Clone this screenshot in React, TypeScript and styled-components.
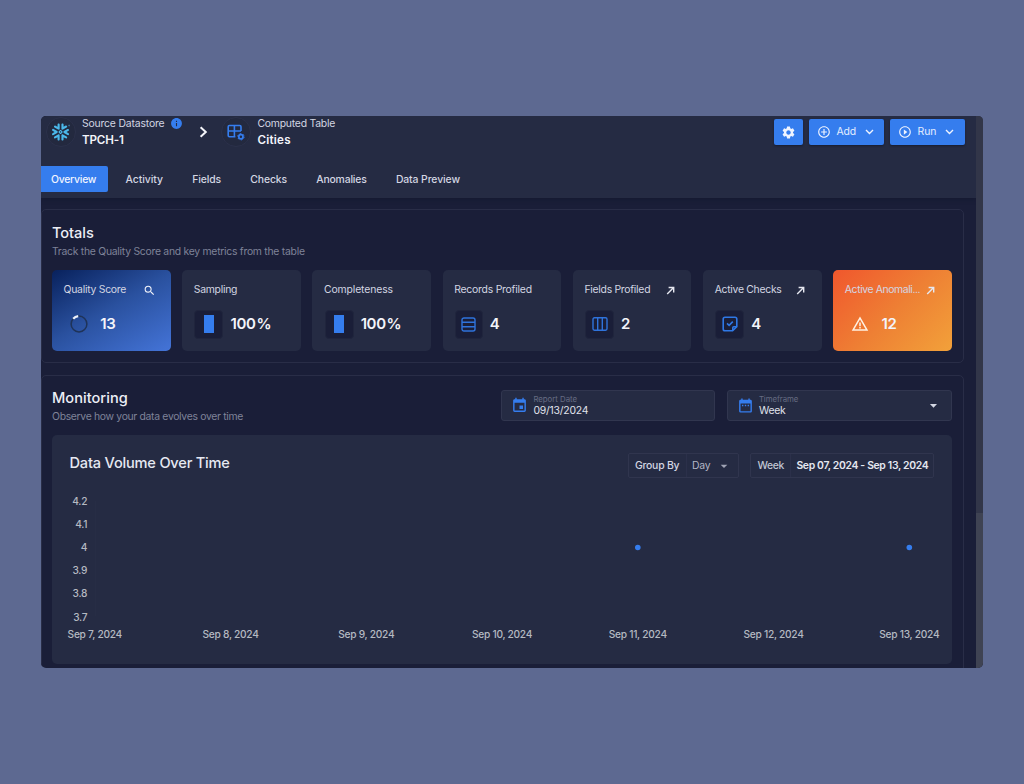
import React from "react";
import styled, { createGlobalStyle, css } from "styled-components";
import {
  MdSettings,
  MdAddCircleOutline,
  MdPlayCircleOutline,
  MdSearch,
  MdEvent,
  MdDateRange,
  MdArrowDropDown,
  MdWarningAmber,
  MdInfo,
} from "react-icons/md";
import { SiSnowflake } from "react-icons/si";

const blue = "#357dee";
const surface = "#252b43";
const base = "#1a1e38";
const line = "#292d47";

const GlobalStyle = createGlobalStyle`
  * { box-sizing: border-box; }
  body { margin: 0; background: #5d6991; font-family: Inter, "Liberation Sans", sans-serif; }
`;

const Page = styled.main`
  height: 784px;
  padding: 116px 41px;
`;

const Window = styled.div`
  display: flex;
  width: 942px;
  height: 552px;
  border-radius: 5px;
  overflow: hidden;
  background: ${base};
`;

const Content = styled.div`
  width: 935px;
  height: 100%;
  overflow: hidden;
`;

const Scrollbar = styled.div`
  width: 7px;
  background: #3f4353;
`;

const Thumb = styled.div`
  height: 397px;
  background: #323649;
`;

const Text = styled.span<{ $size?: number; $weight?: number; $track?: number; $color?: string; $line?: number }>`
  display: block;
  white-space: nowrap;
  font-size: ${(p) => p.$size ?? 10.4}px;
  font-weight: ${(p) => p.$weight ?? 400};
  letter-spacing: ${(p) => p.$track ?? -0.25}px;
  line-height: ${(p) => p.$line ?? 16}px;
  color: ${(p) => p.$color ?? "#d3d6e2"};
`;

const Header = styled.header`
  height: 82px;
  background: ${surface};
  box-shadow: 0 1px 4px rgba(14, 20, 40, 0.5);
`;

const TopBar = styled.div`
  display: flex;
  height: 50px;
  padding: 0 11px 0 5px;
`;

const Crumb = styled.div<{ $gap: number }>`
  display: flex;
  height: 32px;
  align-items: center;
  gap: ${(p) => p.$gap}px;
`;

const Disc = styled.div`
  display: grid;
  place-items: center;
  width: 30px;
  height: 30px;
  border-radius: 50%;
  border: 1px solid #2c314b;
  background: #23293f;
`;

const NameRow = styled.div`
  display: flex;
  align-items: center;
  gap: 6px;
  height: 16px;
  svg { margin-top: -2px; }
`;

const Separator = styled.div`
  display: grid;
  place-items: center;
  width: 38px;
  height: 32px;
  padding-left: 3px;
`;

const Actions = styled.div`
  display: flex;
  gap: 6px;
  margin-left: auto;
  padding-top: 3px;
`;

const Button = styled.button<{ $width: number; $menu?: boolean }>`
  display: flex;
  align-items: center;
  justify-content: ${(p) => (p.$menu ? "flex-start" : "center")};
  gap: 6px;
  width: ${(p) => p.$width}px;
  height: 26px;
  padding: ${(p) => (p.$menu ? "0 0 0 7.5px" : "0")};
  border: 0;
  border-radius: 2px;
  background: ${blue};
  color: #eef3ff;
  font-family: inherit;
  box-shadow: 0 1px 2px rgba(10, 14, 30, 0.5);
  svg:nth-child(3) { margin-left: 3px; }
`;

const Tabs = styled.nav`
  display: flex;
  height: 26px;
`;

const Tab = styled.div<{ $active?: boolean }>`
  display: flex;
  align-items: center;
  padding: 2px 14.6px 0;
  ${(p) =>
    p.$active &&
    css`
      width: 67px;
      padding: 2px 0 0 10px;
      margin-right: 3px;
      border-radius: 0 2px 2px 0;
      background: ${blue};
    `}
`;

const Panel = styled.section<{ $height: number; $gap: number; $top?: number }>`
  width: 923.4px;
  height: ${(p) => p.$height}px;
  margin-top: ${(p) => p.$gap}px;
  margin-left: -0.5px;
  padding: ${(p) => p.$top ?? 13}px 11px 0 10.5px;
  border: 1px solid ${line};
  border-radius: 5px;
`;

const PanelHead = styled.div<{ $height: number }>`
  display: flex;
  justify-content: space-between;
  height: ${(p) => p.$height}px;
`;

const Cards = styled.div`
  display: grid;
  grid-template-columns: repeat(7, 1fr);
  gap: 11.7px;
`;

const Card = styled.article<{ $fill?: string }>`
  height: 81px;
  padding: 12px 12px 0 11.5px;
  border-radius: 5px;
  background: ${(p) => p.$fill ?? surface};
`;

const CardTop = styled.div`
  display: flex;
  align-items: center;
  justify-content: space-between;
  height: 16px;
`;

const CardAction = styled.span`
  display: grid;
  place-items: center;
  width: 18px;
  height: 18px;
  margin-top: 1px;
`;

const CardValue = styled.div`
  display: flex;
  align-items: center;
  gap: 7px;
  margin: 11.5px 0 0 0.7px;
`;

const IconBox = styled.div<{ $plain?: boolean; $width?: number }>`
  display: grid;
  place-items: center;
  width: ${(p) => p.$width ?? 29}px;
  height: 29px;
  border-radius: 4px;
  border: 1px solid ${(p) => (p.$plain ? "transparent" : "#20253d")};
  background: ${(p) => (p.$plain ? "transparent" : base)};
`;

const Meter = styled.div`
  width: 10px;
  height: 18px;
  background: ${blue};
`;

const Fields = styled.div`
  display: flex;
  gap: 12px;
  padding-top: 1px;
`;

const Field = styled.div<{ $width: number }>`
  display: flex;
  align-items: center;
  width: ${(p) => p.$width}px;
  height: 31px;
  padding: 0 9px;
  border: 1px solid #31364f;
  border-radius: 3px;
  background: ${surface};
`;

const FieldText = styled.div`
  flex: 1;
  margin-left: 5px;
  padding-top: 1px;
`;

const ChartCard = styled.div`
  height: 229px;
  border-radius: 5px;
  background: ${surface};
`;

const ChartHead = styled.div`
  display: flex;
  justify-content: space-between;
  height: 56px;
  padding: 18px 17.5px 0 17.5px;
`;

const ChartTools = styled.div`
  display: flex;
  gap: 11px;
`;

const Segmented = styled.div<{ $width: number }>`
  display: flex;
  width: ${(p) => p.$width}px;
  height: 25px;
  border: 1px solid #30354e;
  border-radius: 2px;
`;

const Segment = styled.div<{ $width?: number }>`
  display: flex;
  align-items: center;
  width: ${(p) => (p.$width ? `${p.$width}px` : "auto")};
  padding-left: 6px;
  & + & {
    border-left: 1px solid #2b304a;
    padding-left: 5px;
  }
  svg { margin-left: 5px; }
`;

const Plot = styled.svg`
  display: block;
`;

const AxisLabel = styled.text`
  font-size: 10.2px;
  font-weight: 450;
  fill: #b5bac2;
  letter-spacing: -0.28px;
`;

const Arrow = () => (
  <svg width="9" height="9" viewBox="0 0 9 9" fill="none" stroke="#e6e8f0" strokeWidth="1.4">
    <path d="M1.2 8 L7.4 1.8 M2.6 1.5 H7.7 V6.6" />
  </svg>
);

const Chevron = () => (
  <svg width="9" height="6" viewBox="0 0 9 6" fill="none" stroke="currentColor" strokeWidth="1.4">
    <path d="M1 1 L4.5 4.5 L8 1" />
  </svg>
);

const TableCog = () => (
  <svg width="18" height="17" viewBox="0 0 18 17" fill="none" stroke={blue} strokeWidth="1.6">
    <path d="M8.4 12.8 H2.4 Q1.2 12.8 1.2 11.6 V2.7 Q1.2 1.5 2.4 1.5 H12.8 Q14 1.5 14 2.7 V6.9 M1.2 7 H14 M7.4 1.5 V12.8" />
    <circle cx="13.9" cy="12.7" r="2.1" strokeWidth="1.7" />
    <circle cx="13.9" cy="12.7" r="3.2" strokeWidth="1" strokeDasharray="1.7 1.65" />
  </svg>
);

const RowsIcon = () => (
  <svg width="15" height="15" viewBox="0 0 15 15" fill="none" stroke="#2f73dc" strokeWidth="1.4">
    <rect x="1" y="1" width="13" height="13" rx="2" />
    <path d="M1 5.3 H14 M1 9.7 H14" />
  </svg>
);

const ColumnsIcon = () => (
  <svg width="16" height="14" viewBox="0 0 16 14" fill="none" stroke="#2f73dc" strokeWidth="1.4">
    <rect x="1" y="0.8" width="14" height="12.4" rx="1.4" />
    <path d="M5.7 1 V13 M10.3 1 V13" />
  </svg>
);

const CheckNote = () => (
  <svg width="16" height="16" viewBox="0 0 16 16" fill="none" stroke="#2f78e6" strokeWidth="1.6">
    <path d="M10.6 14.8 H3 Q1.2 14.8 1.2 13 V3 Q1.2 1.2 3 1.2 H13 Q14.8 1.2 14.8 3 V10.6 Z" />
    <path d="M10.8 14.2 V11.8 Q10.8 10.8 11.8 10.8 H14.2" />
    <path d="M5 7.4 L7.1 9.4 L10.8 5.6" />
  </svg>
);

const Ring = () => (
  <svg width="20" height="20" viewBox="0 0 20 20" fill="none">
    <circle cx="10" cy="10" r="7.9" stroke="#1f3358" strokeWidth="1.5" />
    <path d="M4.2 4.7 A7.9 7.9 0 0 1 9.2 2.1" stroke="#eef2fb" strokeWidth="2.2" />
  </svg>
);

type Metric = {
  label: string;
  track: number;
  value: string;
  unit?: string;
  icon: React.ReactNode;
  action?: React.ReactNode;
  fill?: string;
  plain?: boolean;
  boxWidth?: number;
};

const metrics: Metric[] = [
  { label: "Quality Score", track: -0.26, value: "13", icon: <Ring />, action: <MdSearch size={13} color="#f0f2fa" />, plain: true,
    fill: "linear-gradient(150deg, #08215c 0%, #2a519f 48%, #4474d8 100%)" },
  { label: "Sampling", track: -0.25, value: "100", unit: "%", icon: <Meter /> },
  { label: "Completeness", track: -0.12, value: "100", unit: "%", icon: <Meter /> },
  { label: "Records Profiled", track: -0.22, value: "4", icon: <RowsIcon />, boxWidth: 28 },
  { label: "Fields Profiled", track: -0.27, value: "2", icon: <ColumnsIcon />, action: <Arrow /> },
  { label: "Active Checks", track: -0.28, value: "4", icon: <CheckNote />, action: <Arrow /> },
  { label: "Active Anomali...", track: -0.4, value: "12", icon: <MdWarningAmber size={18} color="#fff1e2" />, action: <Arrow />, plain: true,
    fill: "linear-gradient(135deg, #f0572d 0%, #ee8034 52%, #f2a13a 100%)" },
];

const tabs: [string, number][] = [
  ["Overview", -0.24],
  ["Activity", -0.05],
  ["Fields", -0.1],
  ["Checks", -0.1],
  ["Anomalies", -0.16],
  ["Data Preview", -0.1],
];

const ticks = ["4.2", "4.1", "4", "3.9", "3.8", "3.7"];
const days = [7, 8, 9, 10, 11, 12, 13];
const dayX = (i: number) => 42.8 + i * 135.75;

export default function App() {
  return (
    <Page>
      <GlobalStyle />
      <Window>
        <Content>
          <Header>
            <TopBar>
              <Crumb $gap={6}>
                <Disc><SiSnowflake size={18} color="#4bb8ea" /></Disc>
                <div>
                  <NameRow>
                    <Text $track={-0.17}>Source Datastore</Text>
                    <MdInfo size={13} color={blue} />
                  </NameRow>
                  <Text $size={11.6} $weight={600} $track={-0.15} $color="#f3f4fa">TPCH-1</Text>
                </div>
              </Crumb>
              <Separator>
                <svg width="9" height="12" viewBox="0 0 9 12" fill="none" stroke="#f4f5fa" strokeWidth="2">
                  <path d="M1.6 1.2 L6.8 6 L1.6 10.8" />
                </svg>
              </Separator>
              <Crumb $gap={6}>
                <Disc><TableCog /></Disc>
                <div>
                  <Text $track={-0.22}>Computed Table</Text>
                  <Text $size={11.6} $weight={600} $track={0.25} $color="#f3f4fa">Cities</Text>
                </div>
              </Crumb>
              <Actions>
                <Button $width={29}><MdSettings size={15} /></Button>
                <Button $width={75} $menu>
                  <MdAddCircleOutline size={14} />
                  <Text $track={-0.2} $color="#e4edff">Add</Text>
                  <Chevron />
                </Button>
                <Button $width={75} $menu>
                  <MdPlayCircleOutline size={14} />
                  <Text $track={0} $color="#e4edff">Run</Text>
                  <Chevron />
                </Button>
              </Actions>
            </TopBar>
            <Tabs>
              {tabs.map(([name, track], i) => (
                <Tab key={name} $active={i === 0}>
                  <Text $weight={500} $track={track} $color={i === 0 ? "#f0f4ff" : "#d3d6e2"}>{name}</Text>
                </Tab>
              ))}
            </Tabs>
          </Header>

          <Panel $height={154} $gap={11} $top={14}>
            <PanelHead $height={46}>
              <div>
                <Text $size={14.6} $weight={500} $track={-0.05} $line={18} $color="#eceef6">Totals</Text>
                <Text $track={-0.27} $line={20} $color="#7f8398">
                  Track the Quality Score and key metrics from the table
                </Text>
              </div>
            </PanelHead>
            <Cards>
              {metrics.map((m) => (
                <Card key={m.label} $fill={m.fill}>
                  <CardTop>
                    <Text $track={m.track}>{m.label}</Text>
                    {m.action && <CardAction>{m.action}</CardAction>}
                  </CardTop>
                  <CardValue>
                    <IconBox $plain={m.plain} $width={m.boxWidth}>{m.icon}</IconBox>
                    <Text $size={15} $weight={600} $track={-0.35} $line={20} $color="#f3f4fa">
                      {m.value}
                      {m.unit && <>&#8202;{m.unit}</>}
                    </Text>
                  </CardValue>
                </Card>
              ))}
            </Cards>
          </Panel>

          <Panel $height={320} $gap={12}>
            <PanelHead $height={46}>
              <div>
                <Text $size={14.6} $weight={500} $track={0.02} $line={18} $color="#eceef6">Monitoring</Text>
                <Text $track={-0.32} $line={20} $color="#7f8398">
                  Observe how your data evolves over time
                </Text>
              </div>
              <Fields>
                <Field $width={213.5}>
                  <MdEvent size={17} color={blue} />
                  <FieldText>
                    <Text $size={7.8} $track={0} $line={9} $color="#666b82">Report Date</Text>
                    <Text $track={-0.2} $line={13} $color="#e0e3ec">09/13/2024</Text>
                  </FieldText>
                </Field>
                <Field $width={225}>
                  <MdDateRange size={17} color={blue} />
                  <FieldText>
                    <Text $size={7.8} $track={-0.05} $line={9} $color="#666b82">Timeframe</Text>
                    <Text $track={-0.2} $line={13} $color="#e0e3ec">Week</Text>
                  </FieldText>
                  <MdArrowDropDown size={17} color="#d5d8e4" />
                </Field>
              </Fields>
            </PanelHead>
            <ChartCard>
              <ChartHead>
                <Text $size={14.6} $weight={500} $track={-0.2} $line={21} $color="#e6e9f2">Data Volume Over Time</Text>
                <ChartTools>
                  <Segmented $width={111.5}>
                    <Segment $width={57}><Text $weight={500} $track={-0.22}>Group By</Text></Segment>
                    <Segment>
                      <Text $track={-0.1} $color="#b3b7c6">Day</Text>
                      <MdArrowDropDown size={16} color="#a0a4b5" />
                    </Segment>
                  </Segmented>
                  <Segmented $width={184}>
                    <Segment $width={39}><Text $weight={500} $track={-0.3} $color="#c0c4d2">Week</Text></Segment>
                    <Segment><Text $weight={600} $track={-0.33} $color="#e4e7f0">Sep 07, 2024 - Sep 13, 2024</Text></Segment>
                  </Segmented>
                </ChartTools>
              </ChartHead>
              <Plot width="900" height="160" viewBox="0 0 900 160">
                <path d="M43.5 10 V125" stroke="#272d45" strokeWidth="1" />
                {ticks.map((t, i) => (
                  <AxisLabel key={t} x={35.2} y={14 + i * 23.1} textAnchor="end">{t}</AxisLabel>
                ))}
                {days.map((d, i) => (
                  <AxisLabel key={d} x={dayX(i)} y={147} textAnchor="middle">{`Sep ${d}, 2024`}</AxisLabel>
                ))}
                <circle cx={dayX(4)} cy="56.5" r="2.8" fill={blue} />
                <circle cx={dayX(6)} cy="56.5" r="2.8" fill={blue} />
              </Plot>
            </ChartCard>
          </Panel>
        </Content>
        <Scrollbar><Thumb /></Scrollbar>
      </Window>
    </Page>
  );
}
